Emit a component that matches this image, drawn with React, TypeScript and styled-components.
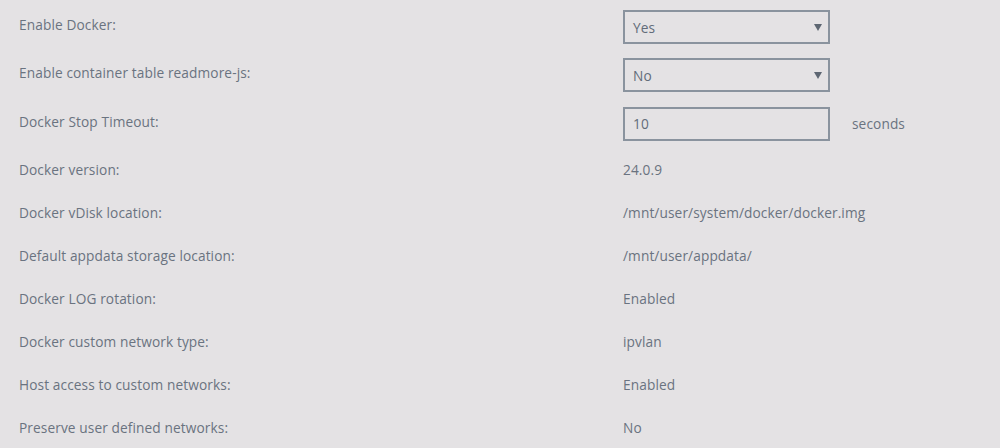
import styled, { createGlobalStyle } from "styled-components";

const GlobalStyle = createGlobalStyle`
  html, body {
    margin: 0;
    padding: 0;
    background: #e4e2e4;
  }
  body {
    font-family: "Open Sans", "Noto Sans", sans-serif;
    font-size: 13.7px;
    letter-spacing: 0.1px;
    color: #6a7380;
  }
`;

const Settings = styled.div`
  width: 1000px;
  height: 448px;
  padding: 3px 0 0 19px;
  box-sizing: border-box;
  overflow: hidden;
`;

const Row = styled.div<{ $height: number }>`
  display: grid;
  grid-template-columns: 604px auto 1fr;
  align-items: center;
  height: ${(p) => p.$height}px;
`;

const Label = styled.div<{ $lift?: boolean }>`
  margin-bottom: ${(p) => (p.$lift ? "5px" : "0")};
`;

const Value = styled.div``;

const Box = styled.div`
  display: flex;
  align-items: center;
  justify-content: space-between;
  width: 207px;
  height: 34px;
  padding: 0 6px 0 8px;
  box-sizing: border-box;
  border: 2px solid #8a939e;
  color: #626c79;
`;

const Arrow = styled.span`
  width: 0;
  height: 0;
  border-left: 4px solid transparent;
  border-right: 4px solid transparent;
  border-top: 7px solid #5d6672;
  margin-top: 1px;
`;

const Unit = styled.span`
  margin-left: 22px;
`;

type Field = { label: string; value: string };

const info: Field[] = [
  { label: "Docker version:", value: "24.0.9" },
  { label: "Docker vDisk location:", value: "/mnt/user/system/docker/docker.img" },
  { label: "Default appdata storage location:", value: "/mnt/user/appdata/" },
  { label: "Docker LOG rotation:", value: "Enabled" },
  { label: "Docker custom network type:", value: "ipvlan" },
  { label: "Host access to custom networks:", value: "Enabled" },
  { label: "Preserve user defined networks:", value: "No" },
];

const Select = ({ value }: { value: string }) => (
  <Box>
    <span>{value}</span>
    <Arrow />
  </Box>
);

export default function App() {
  return (
    <>
      <GlobalStyle />
      <Settings>
        <Row $height={48}>
          <Label $lift>Enable Docker:</Label>
          <Select value="Yes" />
        </Row>
        <Row $height={48}>
          <Label $lift>Enable container table readmore-js:</Label>
          <Select value="No" />
        </Row>
        <Row $height={49}>
          <Label $lift>Docker Stop Timeout:</Label>
          <Box>10</Box>
          <Unit>seconds</Unit>
        </Row>
        {info.map((f) => (
          <Row key={f.label} $height={43}>
            <Label>{f.label}</Label>
            <Value>{f.value}</Value>
          </Row>
        ))}
      </Settings>
    </>
  );
}
